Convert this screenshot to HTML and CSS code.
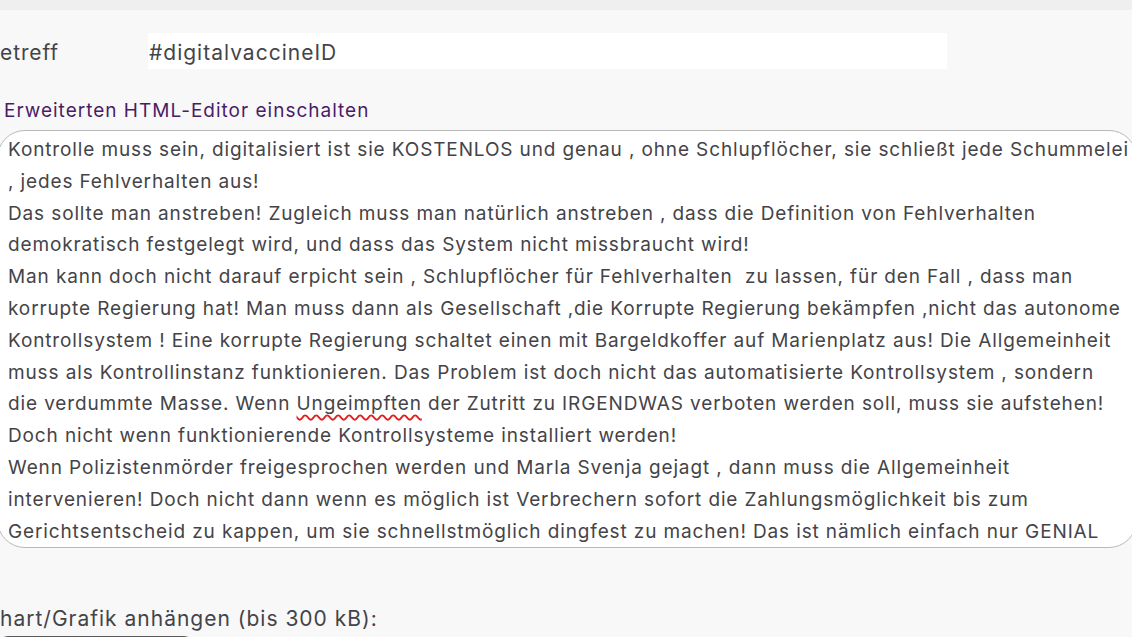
FILE: index.html
```html
<!DOCTYPE html>
<html lang="de">
<head>
<meta charset="utf-8">
<link rel="stylesheet" href="styles.css">
</head>
<body>
<div class="topbar"></div>
<main class="form">
  <div class="row subject">
    <label class="label">etreff</label>
    <div class="input">#digitalvaccineID</div>
  </div>
  <a class="editor-link" href="#">Erweiterten HTML-Editor einschalten</a>
  <div class="dots"></div>
  <div class="textarea">
    <div class="ln">Kontrolle muss sein, digitalisiert ist sie KOSTENLOS und genau , ohne Schlupflöcher, sie schließt jede Schummelei</div>
    <div class="ln">, jedes Fehlverhalten aus!</div>
    <div class="ln">Das sollte man anstreben! Zugleich muss man natürlich anstreben , dass die Definition von Fehlverhalten</div>
    <div class="ln">demokratisch festgelegt wird, und dass das System nicht missbraucht wird!</div>
    <div class="ln">Man kann doch nicht darauf erpicht sein , Schlupflöcher für Fehlverhalten&nbsp; zu lassen, für den Fall , dass man</div>
    <div class="ln">korrupte Regierung hat! Man muss dann als Gesellschaft ,die Korrupte Regierung bekämpfen ,nicht das autonome</div>
    <div class="ln">Kontrollsystem ! Eine korrupte Regierung schaltet einen mit Bargeldkoffer auf Marienplatz aus! Die Allgemeinheit</div>
    <div class="ln">muss als Kontrollinstanz funktionieren. Das Problem ist doch nicht das automatisierte Kontrollsystem , sondern</div>
    <div class="ln">die verdummte Masse. Wenn <span class="spell">Ungeimpften</span> der Zutritt zu IRGENDWAS verboten werden soll, muss sie aufstehen!</div>
    <div class="ln">Doch nicht wenn funktionierende Kontrollsysteme installiert werden!</div>
    <div class="ln">Wenn Polizistenmörder freigesprochen werden und Marla Svenja gejagt , dann muss die Allgemeinheit</div>
    <div class="ln">intervenieren! Doch nicht dann wenn es möglich ist Verbrechern sofort die Zahlungsmöglichkeit bis zum</div>
    <div class="ln">Gerichtsentscheid zu kappen, um sie schnellstmöglich dingfest zu machen! Das ist nämlich einfach nur GENIAL</div>
  </div>
  <div class="attach">hart/Grafik anhängen (bis 300 kB):</div>
  <div class="filebtn"></div>
</main>
</body>
</html>
```

FILE: styles.css
```css
html, body {
  margin: 0;
  padding: 0;
  background: #f8f8f8;
}
html {
  overflow: hidden;
}
body {
  font-family: Inter, "Liberation Sans", sans-serif;
  color: #444448;
}
.topbar {
  height: 10px;
  background: #efefef;
}
.form {
  display: flex;
  flex-direction: column;
}
.row.subject {
  display: flex;
  align-items: center;
  margin-top: 23px;
  height: 36px;
}
.label {
  width: 148px;
  font-size: 21px;
  letter-spacing: 0.9px;
  line-height: 36px;
  padding-top: 3px;
}
.input {
  width: 799px;
  height: 36px;
  background: #ffffff;
  font-size: 21px;
  letter-spacing: 1px;
  line-height: 36px;
  padding: 2px 0 0 1px;
  box-sizing: border-box;
}
.editor-link {
  margin-top: 31px;
  margin-left: 4px;
  font-size: 19px;
  letter-spacing: 1px;
  line-height: 22px;
  color: #4a1c68;
  text-decoration: none;
}
.dots {
  margin-left: 40px;
  width: 96px;
  height: 0;
  border-top: 1px dotted #c8c8c8;
  margin-top: 8px;
}
.textarea {
  margin-top: -1px;
  margin-left: -3px;
  width: 1140px;
  height: 418px;
  box-sizing: border-box;
  background: #ffffff;
  border: 1.5px solid #b9b9b9;
  border-radius: 28px;
  padding: 3px 0 0 10px;
  font-size: 19px;
  letter-spacing: 0.87px;
  line-height: 31.8px;
  overflow: hidden;
}
.ln {
  white-space: nowrap;
}
.spell {
  text-decoration: underline wavy #e02020;
  text-decoration-thickness: 1.5px;
  text-underline-offset: 4px;
}
.attach {
  margin-top: 59px;
  font-size: 21px;
  letter-spacing: 1px;
  line-height: 24px;
}
.filebtn {
  margin-top: 5px;
  width: 192px;
  height: 20px;
  border-top: 2px solid #5a5a5a;
  border-radius: 8px 8px 0 0;
}
```
